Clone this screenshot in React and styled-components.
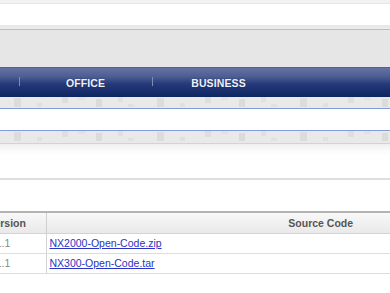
import React from "react";
import styled, { createGlobalStyle } from "styled-components";

const Global = createGlobalStyle`
  html, body { margin: 0; padding: 0; background: #fff; overflow: hidden; }
  body { font-family: "Liberation Sans", Arial, sans-serif; }
`;

const Page = styled.div`
  width: 390px;
  display: flex;
  flex-direction: column;
  overflow: hidden;
`;

const TopStrip = styled.div`
  height: 3px;
  background: #f2f2f2;
  border-bottom: 1px solid #e6e6e6;
`;

const WhiteBand = styled.div`
  height: ${(p) => p.$h}px;
  background: #fff;
`;

const Rule = styled.div`
  height: 4px;
  background: linear-gradient(#e6e6e6, #ededed);
  border-bottom: 1px solid #bdbdbd;
`;

const GrayBand = styled.div`
  height: 37px;
  background: #e6e6e6;
`;

const Nav = styled.nav`
  height: 30px;
  display: flex;
  align-items: center;
  margin-left: -114px;
  background: linear-gradient(#6573a3 0%, #4d5d93 30%, #26397a 55%, #0d2660 100%);
  border-top: 1px solid #55628f;
  box-sizing: border-box;
`;

const NavItem = styled.div`
  position: relative;
  flex: 0 0 133px;
  text-align: center;
  font-size: 10.5px;
  font-weight: bold;
  color: #eef1f7;
  letter-spacing: 0.1px;
  text-shadow: 0 0 1px rgba(20, 30, 70, 0.6);
  &::before {
    content: "";
    display: ${(p) => (p.$sep ? "block" : "none")};
    position: absolute;
    left: 0;
    top: 0;
    width: 1px;
    height: 9px;
    background: #7f8cb5;
  }
`;

const StripWrap = styled.div`
  height: ${(p) => p.$h}px;
  background: #e9e9e9;
  border-bottom: ${(p) => (p.$line ? "1px solid #d2d2da" : "none")};
  overflow: hidden;
  svg { display: block; }
`;

const SearchBand = styled.div`
  height: 21px;
  background: #fff;
  border-top: 1px solid #7f9fd6;
  border-bottom: 1px solid #7f9fd6;
`;

const Fade = styled.div`
  height: 34px;
  background: linear-gradient(#efefef 0px, #fbfbfb 7px, #fff 12px);
  border-bottom: 2px solid #dedede;
`;

const TableWrap = styled.div`
  margin-left: -30px;
`;

const Table = styled.table`
  width: 626px;
  border-collapse: collapse;
  table-layout: fixed;
  font-size: 10.5px;
`;

const Th = styled.th`
  height: 21px;
  padding: 0;
  padding-left: ${(p) => (p.$left ? "18px" : "0")};
  text-align: ${(p) => (p.$left ? "left" : "center")};
  font-weight: bold;
  color: #555;
  background: linear-gradient(#f8f8f8, #e9e9e9);
  border-top: 2px solid #b3b3b3;
  border-bottom: 1px solid #d3d3d3;
  border-right: 1px solid #cfcfcf;
  box-sizing: border-box;
`;

const Td = styled.td`
  height: 20px;
  padding: 0;
  padding-left: ${(p) => (p.$left ? "17px" : "3px")};
  color: #8a8a8a;
  border-bottom: 1px solid #dddddd;
  border-right: 1px solid #d3d3d3;
  box-sizing: border-box;
`;

const Link = styled.a`
  color: #2a33c4;
  text-decoration: underline;
`;

const Pattern = ({ h }) => (
  <svg width="390" height={h} aria-hidden="true">
    <defs>
      <pattern id={`pt${h}`} width="143" height={h} patternUnits="userSpaceOnUse">
        <rect x="14" y="1" width="7" height="9" fill="#dcdcdc" />
        <rect x="37" y="6" width="5" height="4" fill="#e0e0e0" />
        <rect x="62" y="0" width="6" height="6" fill="#dedede" />
        <rect x="78" y="0" width="7" height="3" fill="#e2e2e2" />
        <rect x="96" y="2" width="6" height="8" fill="#dbdbdb" />
        <rect x="118" y="0" width="5" height="5" fill="#e0e0e0" />
        <rect x="128" y="7" width="6" height="3" fill="#e1e1e1" />
      </pattern>
    </defs>
    <rect width="390" height={h} fill={`url(#pt${h})`} />
  </svg>
);

const rows = [
  { v: "1.1.1", f: "NX2000-Open-Code.zip" },
  { v: "1.1.1", f: "NX300-Open-Code.tar" },
];

export default function App() {
  return (
    <Page>
      <Global />
      <TopStrip />
      <WhiteBand $h={21} />
      <Rule />
      <GrayBand />
      <Nav>
        <NavItem>PERSONAL</NavItem>
        <NavItem $sep>OFFICE</NavItem>
        <NavItem $sep>BUSINESS</NavItem>
      </Nav>
      <StripWrap $h={11}>
        <Pattern h={11} />
      </StripWrap>
      <SearchBand />
      <StripWrap $h={12} $line>
        <Pattern h={12} />
      </StripWrap>
      <Fade />
      <WhiteBand $h={31} />
      <TableWrap>
        <Table>
          <colgroup>
            <col style={{ width: "76px" }} />
            <col />
          </colgroup>
          <thead>
            <tr>
              <Th $left>Version</Th>
              <Th>Source Code</Th>
            </tr>
          </thead>
          <tbody>
            {rows.map((r) => (
              <tr key={r.f}>
                <Td $left>{r.v}</Td>
                <Td>
                  <Link href="#">{r.f}</Link>
                </Td>
              </tr>
            ))}
          </tbody>
        </Table>
      </TableWrap>
    </Page>
  );
}
